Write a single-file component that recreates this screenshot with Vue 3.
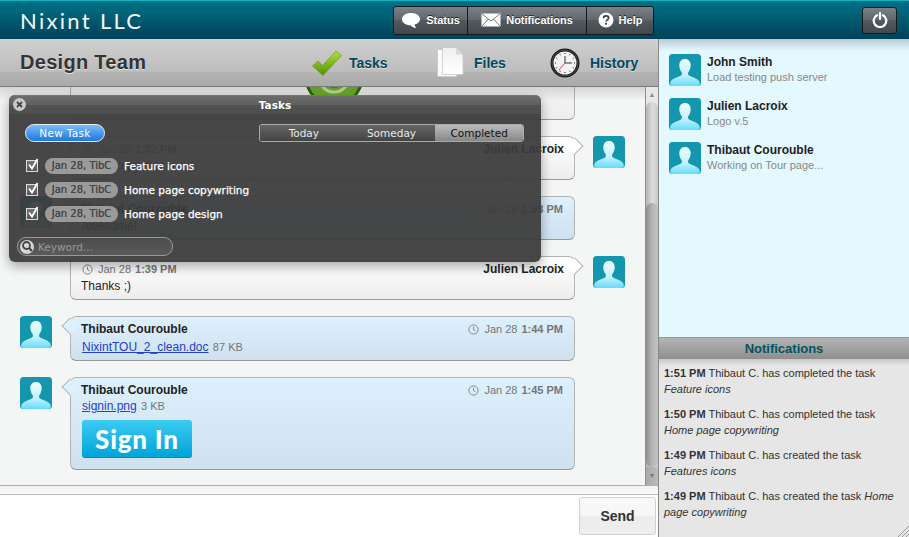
<template>
  <div class="app">
    <svg class="defs" width="0" height="0">
      <defs>
        <linearGradient id="personFill" x1="0" y1="0" x2="0" y2="1">
          <stop offset="0" stop-color="#eefcff" />
          <stop offset="0.6" stop-color="#c4f1fb" />
          <stop offset="1" stop-color="#66dcfb" />
        </linearGradient>
        <linearGradient id="checkFill" x1="0" y1="0" x2="0" y2="1">
          <stop offset="0" stop-color="#b4dc3c" />
          <stop offset="1" stop-color="#4f9400" />
        </linearGradient>
        <linearGradient id="pageFill" x1="0" y1="0" x2="0" y2="1">
          <stop offset="0" stop-color="#f0f0f0" />
          <stop offset="1" stop-color="#ffffff" />
        </linearGradient>
        <symbol id="avatar" viewBox="0 0 32 32">
          <rect width="32" height="32" rx="3.500" fill="#1497ae" />
          <path
            d="M16 5c-3.600 0-5.700 2.700-5.700 6.200 0 2.800 1 5.200 2.300 6.800.5.700.5 2.500-.3 3.300-1.500 1.300-8.300 3-10.300 5.700-.6.800-.9 2.100-.9 2.500 0 1.400 1 2.500 2.400 2.500h25c1.400 0 2.400-1.100 2.400-2.500 0-.4-.3-1.700-.9-2.500-2-2.700-8.800-4.400-10.300-5.700-.8-.8-.8-2.600-.3-3.300 1.300-1.600 2.300-4 2.300-6.800C21.700 7.700 19.600 5 16 5z"
            fill="url(#personFill)"
          />
        </symbol>
        <symbol id="clockSmall" viewBox="0 0 11 11">
          <circle cx="5.500" cy="5.500" r="4.600" fill="none" stroke="#888" stroke-width="1" />
          <path d="M5.500 2.800v2.900l1.900 1" fill="none" stroke="#888" stroke-width="1" />
        </symbol>
      </defs>
    </svg>

    <header class="topbar">
      <div class="logo">Nixint LLC</div>
      <nav class="top-group">
        <button class="top-btn status">
          <svg width="20" height="17" viewBox="0 0 20 17">
            <path d="M10 1C4.800 1 1 3.600 1 7.200c0 3.500 3.700 6 8.500 6 .9 1.300 3 2.600 6 2.800-1-.8-1.800-2-1.900-3.400 3.300-.9 5.400-3 5.400-5.400C19 3.600 15.200 1 10 1z" fill="#fff" />
          </svg>
          Status
        </button>
        <button class="top-btn notif">
          <svg width="20" height="14" viewBox="0 0 20 14">
            <rect x="0.500" y="0.500" width="19" height="13" fill="#fff" />
            <path d="M1 1l9 7 9-7M1 13l6.500-7M19 13l-6.500-7" fill="none" stroke="#555" stroke-width="0.800" />
          </svg>
          Notifications
        </button>
        <button class="top-btn help">
          <svg width="16" height="16" viewBox="0 0 16 16">
            <circle cx="8" cy="8" r="7.500" fill="#fff" />
            <path d="M5.500 6.300c0-1.500 1.100-2.400 2.600-2.400s2.500.9 2.500 2.100c0 1.800-2.500 1.900-2.500 3.600" fill="none" stroke="#3d4247" stroke-width="1.800" />
            <rect x="7.100" y="10.700" width="1.900" height="1.900" fill="#3d4247" />
          </svg>
          Help
        </button>
      </nav>
      <button class="top-btn power">
        <svg width="16" height="16" viewBox="0 0 16 16">
          <path d="M5 3.200a6.300 6.300 0 1 0 6 0" fill="none" stroke="#fff" stroke-width="2.200" stroke-linecap="round" />
          <path d="M8 1v6" stroke="#fff" stroke-width="2.200" stroke-linecap="round" />
        </svg>
      </button>
    </header>

    <div class="main">
      <section class="left">
        <div class="subhead">
          <h1 class="room">Design Team</h1>
          <a class="tab tab-tasks">
            <svg width="30" height="26" viewBox="0 0 30 26">
              <path d="M0.500 16L6 11l4.500 4.500L24 1l5.500 4.500L11 25.500z" fill="url(#checkFill)" stroke="#5b9a10" stroke-width="0.600" />
            </svg>
            Tasks
          </a>
          <a class="tab tab-files">
            <svg width="27" height="31" viewBox="0 0 27 31">
              <path d="M0.500 2.500h19v27h-19z" fill="#fafafa" stroke="#c8c8c8" stroke-width="0.800" />
              <path d="M5.500 0.500h13.500l7 7v20h-20.500z" fill="url(#pageFill)" stroke="#c8c8c8" stroke-width="0.800" />
              <path d="M19 0.500v7h7z" fill="#d8d8d8" />
            </svg>
            Files
          </a>
          <a class="tab tab-history">
            <svg width="30" height="30" viewBox="0 0 30 30">
              <circle cx="15" cy="15" r="14.500" fill="#1c1c1c" />
              <circle cx="15" cy="15" r="13" fill="none" stroke="#555" stroke-width="0.800" />
              <circle cx="15" cy="15" r="11.500" fill="#f2f2f2" />
              <path
                d="M15 5v1M15 24v1M5 15h1M24 15h1M20 6.300l-.5.900M10 6.300l.5.900M20 23.700l-.5-.9M10 23.700l.5-.9M6.300 10l.9.500M23.700 10l-.9.500M6.300 20l.9-.5M23.700 20l-.9-.5"
                stroke="#222"
                stroke-width="1"
              />
              <path d="M15 8v7h7" fill="none" stroke="#222" stroke-width="0.900" />
              <path d="M15 15l-6 7" stroke="#c22" stroke-width="0.800" />
            </svg>
            History
          </a>
        </div>

        <div class="chat">
          <div class="messages">
            <div
              v-for="(msg, i) in messages"
              :key="i"
              class="row"
              :class="{ 'row-first': i === 0 }"
            >
              <svg v-if="msg.side === 'left'" class="avatar" width="32" height="32"><use href="#avatar" /></svg>
              <div v-else></div>
              <div class="bubble" :class="msg.side === 'left' ? 'bubble-left' : 'bubble-right'">
                <div v-if="msg.name" class="meta">
                  <span class="meta-time">
                    <svg width="11" height="11"><use href="#clockSmall" /></svg>
                    Jan 28 <b>{{ msg.time }}</b>
                  </span>
                  <span class="meta-name">{{ msg.name }}</span>
                </div>
                <p v-if="msg.text" class="msg-text">{{ msg.text }}</p>
                <p v-if="msg.file" class="msg-text" :class="msg.signin ? 'msg-shot' : 'msg-file'">
                  <a class="file-link">{{ msg.file }}</a> <span class="file-size">{{ msg.size }}</span>
                </p>
                <div v-if="msg.signin" class="signin-shot">Sign In</div>
                <svg v-if="msg.badge" class="badge" width="60" height="60" viewBox="0 0 60 60">
                  <circle cx="30" cy="30" r="29.500" fill="#2c6e10" />
                  <circle cx="30" cy="30" r="26.500" fill="#6fb52a" />
                  <circle cx="30" cy="30" r="15" fill="none" stroke="#c4e4a0" stroke-width="3" />
                  <circle cx="30" cy="30" r="11" fill="#4b8f1c" />
                </svg>
              </div>
              <svg v-if="msg.side === 'right'" class="avatar" width="32" height="32"><use href="#avatar" /></svg>
              <div v-else></div>
            </div>
          </div>
          <div class="scrollbar">
            <div class="arrow">▲</div>
            <div class="track"><div class="thumb"></div></div>
            <div class="arrow arrow-down">▼</div>
          </div>
        </div>

        <div class="composer">
          <div class="composer-strip"></div>
          <div class="composer-row">
            <textarea class="composer-input"></textarea>
            <button class="send">Send</button>
          </div>
        </div>
      </section>

      <aside class="right">
        <ul class="people">
          <li v-for="p in people" :key="p.name" class="person">
            <svg class="avatar" width="32" height="32"><use href="#avatar" /></svg>
            <div>
              <div class="person-name">{{ p.name }}</div>
              <div class="person-status">{{ p.status }}</div>
            </div>
          </li>
        </ul>
        <h2 class="notif-head">Notifications</h2>
        <div class="notif-list">
          <p v-for="(n, i) in notifications" :key="i" class="notif-item">
            <b>{{ n.time }}</b> {{ n.text }} <i>{{ n.task }}</i>
          </p>
          <svg class="grip" width="12" height="12" viewBox="0 0 12 12">
            <path d="M12 1L1 12M12 5l-7 7M12 9l-3 3" stroke="#999" stroke-width="1" />
          </svg>
        </div>
      </aside>
    </div>

    <div class="popup">
      <div class="popup-title">
        <span class="popup-close">
          <svg width="13" height="13" viewBox="0 0 13 13">
            <circle cx="6.500" cy="6.500" r="6.500" fill="#c8c8c8" />
            <path d="M4 4l5 5M9 4l-5 5" stroke="#444" stroke-width="1.800" />
          </svg>
        </span>
        Tasks
      </div>
      <div class="popup-toolbar">
        <button class="new-task">New Task</button>
        <div class="segments">
          <button class="segment">Today</button>
          <button class="segment">Someday</button>
          <button class="segment segment-active">Completed</button>
        </div>
      </div>
      <ul class="task-list">
        <li v-for="t in tasks" :key="t" class="task">
          <span class="task-check">
            <svg width="14" height="14" viewBox="0 0 14 14">
              <path d="M3 6.500l3 4L11.500 1" fill="none" stroke="#fff" stroke-width="1.800" />
            </svg>
          </span>
          <span class="task-pill">Jan 28, TibC</span>
          <span class="task-label">{{ t }}</span>
        </li>
      </ul>
      <div class="search">
        <span class="search-icon">
          <svg width="13" height="13" viewBox="0 0 13 13">
            <circle cx="5.500" cy="5.500" r="3.500" fill="none" stroke="#444" stroke-width="1.800" />
            <path d="M8 8l3 3" stroke="#444" stroke-width="2.200" />
          </svg>
        </span>
        <span class="search-text">Keyword...</span>
      </div>
    </div>
  </div>
</template>

<script setup>
const messages = [
  { side: 'right', badge: true },
  { side: 'right', name: 'Julien Lacroix', time: '1:32 PM', text: 'Okay, copy that' },
  { side: 'left', name: 'Thibaut Courouble', time: '1:38 PM', text: 'Awesome!' },
  { side: 'right', name: 'Julien Lacroix', time: '1:39 PM', text: 'Thanks ;)' },
  { side: 'left', name: 'Thibaut Courouble', time: '1:44 PM', file: 'NixintTOU_2_clean.doc', size: '87 KB' },
  { side: 'left', name: 'Thibaut Courouble', time: '1:45 PM', file: 'signin.png', size: '3 KB', signin: true }
];

const people = [
  { name: 'John Smith', status: 'Load testing push server' },
  { name: 'Julien Lacroix', status: 'Logo v.5' },
  { name: 'Thibaut Courouble', status: 'Working on Tour page...' }
];

const notifications = [
  { time: '1:51 PM', text: 'Thibaut C. has completed the task', task: 'Feature icons' },
  { time: '1:50 PM', text: 'Thibaut C. has completed the task', task: 'Home page copywriting' },
  { time: '1:49 PM', text: 'Thibaut C. has created the task', task: 'Features icons' },
  { time: '1:49 PM', text: 'Thibaut C. has created the task', task: 'Home page copywriting' }
];

const tasks = ['Feature icons', 'Home page copywriting', 'Home page design'];
</script>

<style>
html,
body {
  margin: 0;
  overflow: hidden;
}
</style>

<style scoped>
.app {
  position: relative;
  width: 909px;
  height: 537px;
  display: flex;
  flex-direction: column;
  overflow: hidden;
  font-family: "Liberation Sans", Arial, sans-serif;
  font-size: 12px;
  color: #222;
}
.defs {
  position: absolute;
}
button {
  font-family: inherit;
  cursor: pointer;
}

.topbar {
  flex: none;
  height: 39px;
  box-sizing: border-box;
  display: flex;
  align-items: center;
  padding: 0 12px 0 20px;
  border-top: 1px solid #12b4c4;
  background: linear-gradient(#007287, #00425a);
}
.logo {
  flex: none;
  width: 373px;
  font-family: Lato, sans-serif;
  font-size: 22px;
  letter-spacing: 2.300px;
  color: #f4f8f9;
}
.top-group {
  display: flex;
  height: 27px;
  border: 1px solid #14191c;
  border-radius: 3px;
  overflow: hidden;
}
.top-btn {
  height: 100%;
  display: flex;
  align-items: center;
  justify-content: center;
  gap: 5px;
  padding: 0;
  border: none;
  border-left: 1px solid #14191c;
  background: linear-gradient(#7a8287, #5f666b 50%, #54595e 50%, #43484c);
  color: #fff;
  font-size: 11px;
  font-weight: bold;
  text-shadow: 0 -1px 0 #222;
}
.top-btn.status {
  width: 73px;
  border-left: none;
}
.top-btn.notif {
  width: 119px;
}
.top-btn.help {
  width: 67px;
}
.top-btn.power {
  width: 35px;
  height: 27px;
  margin-left: auto;
  border: 1px solid #14191c;
  border-radius: 3px;
}

.main {
  flex: 1;
  min-height: 0;
  display: flex;
}
.left {
  flex: none;
  width: 658px;
  display: flex;
  flex-direction: column;
}
.subhead {
  flex: none;
  height: 48px;
  box-sizing: border-box;
  display: flex;
  align-items: center;
  padding-left: 20px;
  border-bottom: 1px solid #7b7b7b;
  background: linear-gradient(#d0d0d0, #bcbcbc 71%, #b4b4b4 71%, #a9a9a9);
}
.room {
  flex: none;
  width: 292px;
  margin: 0;
  font-size: 20px;
  font-weight: bold;
  letter-spacing: 0.300px;
  color: #343434;
  text-shadow: 0 1px 0 #e4e4e4;
}
.tab {
  flex: none;
  display: flex;
  align-items: center;
  gap: 7px;
  font-size: 14px;
  font-weight: bold;
  color: #03495a;
  text-shadow: 0 1px 0 #ddd;
}
.tab-tasks {
  width: 125px;
}
.tab-files {
  width: 113px;
  gap: 10px;
}
.tab-history {
  gap: 10px;
}

.chat {
  position: relative;
  flex: 1;
  min-height: 0;
  display: flex;
  background: #f4f6f6;
}
.chat::after {
  content: "";
  position: absolute;
  left: 0;
  right: 13px;
  top: 0;
  height: 14px;
  background: linear-gradient(rgba(0, 0, 0, 0.13), rgba(0, 0, 0, 0));
  pointer-events: none;
}
.messages {
  flex: 1;
  min-width: 0;
  overflow: hidden;
}
.row {
  display: grid;
  grid-template-columns: 32px 505px 32px;
  column-gap: 18px;
  padding-left: 20px;
  margin-bottom: 16px;
  align-items: start;
}
.row-first {
  margin-top: -70px;
}
.avatar {
  display: block;
}
.bubble {
  position: relative;
  box-sizing: border-box;
  min-height: 44px;
  border: 1px solid #b4b4b4;
  border-bottom-color: #999;
  border-radius: 6px;
}
.bubble::before {
  content: "";
  position: absolute;
  top: 3px;
  width: 11px;
  height: 11px;
  border: 1px solid #b4b4b4;
  border-width: 0 0 1px 1px;
  transform: rotate(45deg);
}
.bubble-left {
  padding: 4px 11px 5px 10px;
  background: linear-gradient(#ddf0fd, #cfe1ef);
}
.bubble-left::before {
  left: -7px;
  background: #ddf0fd;
}
.bubble-right {
  padding: 4px 10px 5px;
  background: linear-gradient(#fff, #eeeeee);
}
.bubble-right::before {
  right: -7px;
  background: #fff;
  transform: rotate(225deg);
}
.row-first .bubble::before {
  display: none;
}
.meta {
  display: flex;
  justify-content: space-between;
  align-items: center;
  height: 16px;
}
.bubble-left .meta {
  flex-direction: row-reverse;
}
.meta-time {
  display: flex;
  align-items: center;
  gap: 5px;
  font-size: 11px;
  color: #777;
}
.bubble-right .meta-time {
  margin-left: 1px;
}
.meta-time b {
  margin-left: -1px;
}
.meta-name {
  font-size: 12px;
  font-weight: bold;
  color: #222;
}
.msg-text {
  margin: 1px 0 0;
  line-height: 16px;
  font-size: 12px;
  color: #222;
}
.msg-file {
  margin-top: 2px;
}
.msg-shot {
  margin-top: 0;
}
.file-link {
  margin-left: 1px;
  color: #2242c8;
  text-decoration: underline;
}
.file-size {
  margin-left: 1px;
  font-size: 11px;
  color: #777;
}
.signin-shot {
  width: 110px;
  height: 38px;
  box-sizing: border-box;
  margin: 6px 0 6px 1px;
  border-radius: 3px;
  border-bottom: 1px solid #0089b4;
  background: linear-gradient(#3ccbf2, #00a4d8);
  color: #fff;
  font-family: Lato, sans-serif;
  font-size: 26px;
  font-weight: 900;
  letter-spacing: 0.800px;
  line-height: 38px;
  text-align: center;
}
.badge {
  display: block;
  margin: 25px 0 7px 223px;
}

.scrollbar {
  flex: none;
  width: 13px;
  box-sizing: border-box;
  display: flex;
  flex-direction: column;
  background: #e4e6e6;
  border-left: 1px solid #8f8f8f;
}
.arrow {
  flex: none;
  height: 15px;
  line-height: 15px;
  text-align: center;
  font-size: 7px;
  color: #888;
  background: #e6e8e8;
}
.arrow-down {
  height: 18px;
  line-height: 18px;
  background: linear-gradient(90deg, #a8a8a8, #bcbcbc);
  color: #777;
}
.track {
  flex: 1;
  display: flex;
  flex-direction: column;
  justify-content: flex-end;
  background: linear-gradient(90deg, #b4b4b4, #dcdcdc 55%, #c8c8c8);
  border-radius: 7px 7px 0 0;
}
.thumb {
  height: 264px;
  border-radius: 7px;
  background: linear-gradient(90deg, #8f8f8f, #b4b4b4 50%, #c2c2c2);
}

.composer {
  flex: none;
  height: 52px;
  display: flex;
  flex-direction: column;
  background: #fff;
}
.composer-strip {
  flex: none;
  height: 8px;
  border-top: 1px solid #b0b0b0;
  border-bottom: 1px solid #bbb;
  background: linear-gradient(#f2f2f2, #fafafa);
}
.composer-row {
  flex: 1;
  display: flex;
  align-items: flex-start;
  padding: 2px 2px 0 0;
}
.composer-input {
  flex: 1;
  height: 36px;
  border: none;
  outline: none;
  resize: none;
}
.send {
  flex: none;
  width: 77px;
  height: 38px;
  border: 1px solid #d0d0d0;
  border-radius: 3px;
  background: linear-gradient(#f9f9f9, #f6f6f6 50%, #ececec 50%, #efefef);
  color: #333;
  font-size: 14px;
  font-weight: bold;
}

.right {
  flex: 1;
  min-width: 0;
  display: flex;
  flex-direction: column;
  border-left: 1px solid #888;
}
.people {
  flex: 1;
  min-height: 0;
  margin: 0;
  padding: 15px 10px 0;
  list-style: none;
  background: linear-gradient(#b9cbd2, #e3f8ff 12px);
}
.person {
  display: flex;
  gap: 6px;
  margin-bottom: 12px;
}
.person-name {
  margin-top: 1px;
  font-size: 12px;
  font-weight: bold;
  line-height: 15px;
  color: #222;
}
.person-status {
  font-size: 11px;
  line-height: 15px;
  color: #888;
}
.notif-head {
  flex: none;
  height: 22px;
  box-sizing: border-box;
  margin: 0;
  border-top: 1px solid #999;
  background: linear-gradient(#b4b4b4, #8e8e8e);
  font-size: 13px;
  font-weight: bold;
  line-height: 21px;
  text-align: center;
  color: #03535f;
}
.notif-list {
  position: relative;
  flex: none;
  height: 178px;
  box-sizing: border-box;
  padding: 6px 8px 0 5px;
  background: linear-gradient(#c8c8c8, #e6e6e6 7px);
}
.notif-item {
  margin: 0 0 9px;
  font-size: 11px;
  line-height: 16px;
  color: #333;
}
.grip {
  position: absolute;
  right: 0;
  bottom: 0;
}

.popup {
  position: absolute;
  left: 9px;
  top: 95px;
  width: 532px;
  height: 167px;
  display: flex;
  flex-direction: column;
  border-radius: 6px;
  background: rgba(60, 60, 60, 0.94);
  box-shadow: 0 4px 12px rgba(0, 0, 0, 0.35);
  font-family: "DejaVu Sans", sans-serif;
  font-size: 10.500px;
  color: #fff;
}
.popup-title {
  position: relative;
  flex: none;
  height: 19px;
  line-height: 19px;
  text-align: center;
  border-radius: 6px 6px 0 0;
  border-top: 1px solid #777;
  box-sizing: border-box;
  background: linear-gradient(#6c6c6c, #5e5e5e 52%, #525252 52%, #4e4e4e);
  font-weight: bold;
  font-size: 10.500px;
}
.popup-close {
  position: absolute;
  left: 4px;
  top: 2px;
  line-height: 0;
}
.popup-toolbar {
  flex: none;
  display: flex;
  justify-content: space-between;
  height: 18px;
  margin-top: 10px;
  padding: 0 17px 0 16px;
}
.new-task {
  width: 80px;
  padding: 0;
  border: 1px solid #e8e8e8;
  border-radius: 9px;
  background: linear-gradient(#7cbcf6, #4a98ee 50%, #1f78e4);
  color: #fff;
  font-size: 10.500px;
  letter-spacing: 0.300px;
}
.segments {
  display: flex;
  width: 265px;
  border: 1px solid #aaa;
  border-radius: 3px;
  overflow: hidden;
  box-sizing: border-box;
}
.segment {
  flex: 1;
  padding: 0;
  border: none;
  background: linear-gradient(#666, #444);
  color: #e8e8e8;
  font-size: 10.500px;
}
.segment-active {
  background: linear-gradient(#bbb, #888);
  color: #111;
}
.task-list {
  flex: none;
  margin: 12px 0 0;
  padding: 0 0 0 17px;
  list-style: none;
}
.task {
  height: 24px;
  display: flex;
  align-items: center;
}
.task-check {
  flex: none;
  width: 12px;
  height: 12px;
  margin-right: 7px;
  border: 1px solid #ddd;
  background: linear-gradient(#777, #555);
  box-sizing: border-box;
  line-height: 0;
}
.task-check svg {
  margin: -3px 0 0 -1px;
}
.task-pill {
  flex: none;
  width: 73px;
  height: 16px;
  margin-right: 6px;
  border-radius: 8px;
  background: #9a9a9a;
  color: #464646;
  line-height: 16px;
  text-align: center;
  font-size: 10px;
  text-shadow: 0 0 0.5px #464646;
}
.task-label {
  font-size: 10.500px;
  -webkit-text-stroke: 0.25px #fff;
}
.search {
  flex: none;
  box-sizing: border-box;
  width: 156px;
  height: 19px;
  margin: 11px 0 0 8px;
  display: flex;
  align-items: center;
  gap: 4px;
  padding-left: 2px;
  border: 1px solid #999;
  border-radius: 9px;
  background: linear-gradient(#4c4c4c, #5a5a5a);
}
.search-icon {
  flex: none;
  width: 14px;
  height: 14px;
  border-radius: 50%;
  background: #d6d6d6;
  display: flex;
  align-items: center;
  justify-content: center;
}
.search-text {
  color: #999;
  font-size: 10.500px;
}
</style>
